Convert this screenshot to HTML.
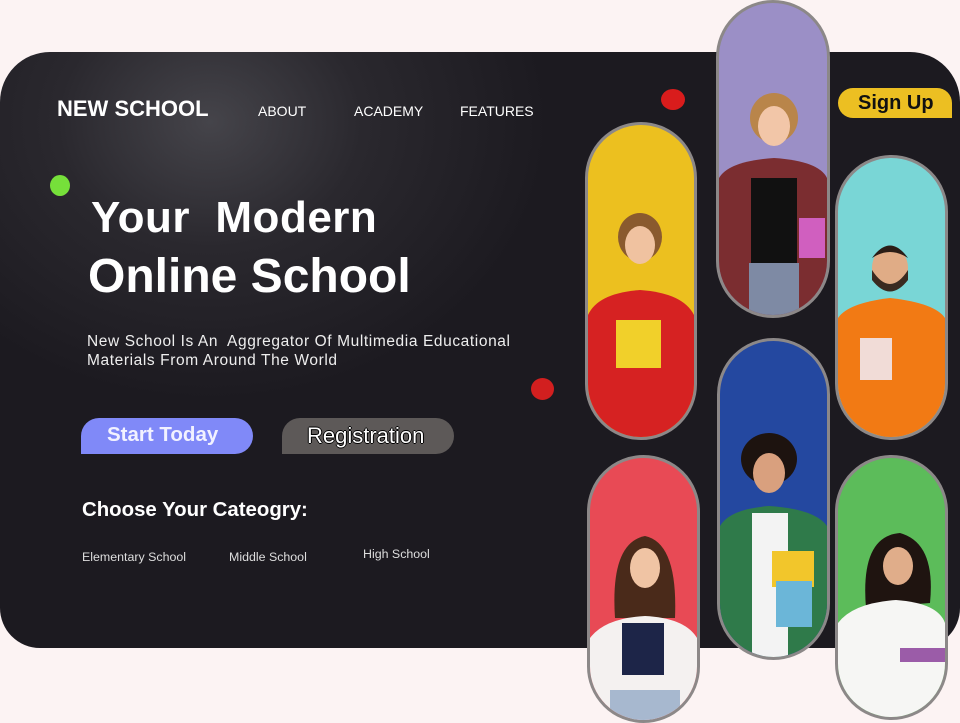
<!DOCTYPE html>
<html><head><meta charset="utf-8"><style>
*{margin:0;padding:0;box-sizing:border-box}
body{width:960px;height:723px;background:#fcf3f3;position:relative;overflow:hidden;font-family:"Liberation Sans",sans-serif}
.card{position:absolute;left:0;top:52px;width:960px;height:596px;border-radius:50px 50px 40px 40px;background:radial-gradient(ellipse 340px 280px at 210px 70px,#45444a 0%,#2a282e 45%,#1c1a20 100%);background-color:#1c1a20}
.t{position:absolute;color:#fff;white-space:nowrap}
.dot{position:absolute;border-radius:50%}
.pill{position:absolute;border:3px solid #8c8888;border-radius:60px;overflow:hidden}
.pill svg{width:100%;height:100%;display:block}
</style></head><body>
<div class="card"></div>
<div class="t" style="left:57px;top:96px;font-size:22px;font-weight:bold">NEW SCHOOL</div>
<div class="t" style="left:258px;top:103px;font-size:14px">ABOUT</div>
<div class="t" style="left:354px;top:103px;font-size:14px">ACADEMY</div>
<div class="t" style="left:460px;top:103px;font-size:14px">FEATURES</div>
<div class="dot" style="left:50px;top:175px;width:20px;height:21px;background:#76e03a"></div>
<div class="dot" style="left:661px;top:89px;width:24px;height:21px;background:#d91c1c"></div>
<div class="dot" style="left:531px;top:378px;width:23px;height:22px;background:#d21f1f"></div>
<div class="t" style="left:91px;top:193px;font-size:44px;font-weight:bold;letter-spacing:0.5px">Your&nbsp; Modern</div>
<div class="t" style="left:88px;top:249px;font-size:48px;font-weight:bold">Online School</div>
<div class="t" style="left:87px;top:332px;font-size:15.5px;line-height:19px;color:#eee;letter-spacing:0.6px">New School Is An&nbsp; Aggregator Of Multimedia Educational<br>Materials From Around The World</div>
<div style="position:absolute;left:81px;top:418px;width:172px;height:36px;background:#8089f8;border-radius:18px 18px 18px 0"></div>
<div class="t" style="left:107px;top:423px;font-size:20.5px;font-weight:bold;color:#f2f2ff">Start Today</div>
<div style="position:absolute;left:282px;top:418px;width:172px;height:36px;background:#5d5958;border-radius:18px 18px 18px 0"></div>
<div class="t" style="left:307px;top:423px;font-size:22px;color:#fff;text-shadow:-1px 0 #000,1px 0 #000,0 -1px #000,0 1px #000">Registration</div>
<div class="t" style="left:82px;top:499px;font-size:20.4px;font-weight:bold">Choose Your Cateogry:</div>
<div class="t" style="left:82px;top:550px;font-size:12.4px;color:#ddd">Elementary School</div>
<div class="t" style="left:229px;top:550px;font-size:12.4px;color:#ddd">Middle School</div>
<div class="t" style="left:363px;top:547px;font-size:12.4px;color:#ddd">High School</div>
<div style="position:absolute;left:838px;top:88px;width:114px;height:30px;background:#ecbf22;border-radius:16px 16px 0 16px"></div>
<div class="t" style="left:858px;top:92px;font-size:20px;font-weight:bold;color:#111">Sign Up</div>

<div class="pill" style="left:585px;top:122px;width:112px;height:318px;background:#ecc01f"><svg viewBox="0 0 106 312"><ellipse cx="52" cy="112" rx="22" ry="24" fill="#8a5a2e"/><ellipse cx="52" cy="120" rx="15" ry="19" fill="#f0c2a0"/><path d="M0 312 V190 Q10 168 52 165 Q95 168 106 190 V312Z" fill="#d62222"/><rect x="28" y="195" width="45" height="48" fill="#f1d02a"/></svg></div>
<div class="pill" style="left:716px;top:0;width:114px;height:318px;background:#9b8fc6"><svg viewBox="0 0 108 312"><ellipse cx="55" cy="115" rx="24" ry="25" fill="#b9854a"/><ellipse cx="55" cy="123" rx="16" ry="20" fill="#f2c6a8"/><path d="M0 312 V175 Q10 158 55 155 Q100 158 108 175 V312Z" fill="#7b2d30"/><path d="M32 175 H78 V270 H32Z" fill="#111"/><rect x="30" y="260" width="50" height="52" fill="#7e8aa4"/><rect x="80" y="215" width="26" height="40" fill="#d05fbf"/></svg></div>
<div class="pill" style="left:835px;top:155px;width:113px;height:285px;background:#79d6d6"><svg viewBox="0 0 107 279"><ellipse cx="52" cy="110" rx="18" ry="22" fill="#e0ac86"/><path d="M34 112 Q52 140 70 112 V122 Q52 145 34 122Z" fill="#3a2a20"/><path d="M34 100 Q52 75 70 100 Q52 88 34 100Z" fill="#2a1d16"/><path d="M0 279 V160 Q10 145 52 140 Q97 145 107 160 V279Z" fill="#f27a14"/><rect x="22" y="180" width="32" height="42" fill="#f1dcd7"/></svg></div>
<div class="pill" style="left:587px;top:455px;width:113px;height:268px;background:#e84a55"><svg viewBox="0 0 107 262"><path d="M25 160 Q20 85 55 78 Q88 85 85 160Z" fill="#4a2a1a"/><ellipse cx="55" cy="110" rx="15" ry="20" fill="#f0c4a4"/><path d="M0 262 V180 Q15 160 55 158 Q95 160 107 180 V262Z" fill="#f4f1f0"/><rect x="32" y="165" width="42" height="52" fill="#1d2548"/><rect x="20" y="232" width="70" height="30" fill="#a7b8cf"/></svg></div>
<div class="pill" style="left:717px;top:338px;width:113px;height:322px;background:#2448a0"><svg viewBox="0 0 107 316"><ellipse cx="49" cy="118" rx="28" ry="26" fill="#1d130f"/><ellipse cx="49" cy="132" rx="16" ry="20" fill="#d9a07e"/><path d="M0 316 V185 Q10 168 49 165 Q95 168 107 185 V316Z" fill="#2f7a4a"/><path d="M32 172 H68 V316 H32Z" fill="#f3f3f3"/><rect x="52" y="210" width="42" height="36" fill="#f2c62b"/><rect x="56" y="240" width="36" height="46" fill="#6bb6d8"/></svg></div>
<div class="pill" style="left:835px;top:455px;width:113px;height:265px;background:#5cbc5a"><svg viewBox="0 0 107 259"><path d="M28 150 Q22 78 62 75 Q98 85 92 145Z" fill="#1f1410"/><ellipse cx="60" cy="108" rx="15" ry="19" fill="#e0ad8a"/><path d="M0 259 V165 Q15 145 58 142 Q100 145 107 165 V259Z" fill="#f6f6f4"/><rect x="62" y="190" width="45" height="14" fill="#9b5ca8"/></svg></div>
</body></html>
